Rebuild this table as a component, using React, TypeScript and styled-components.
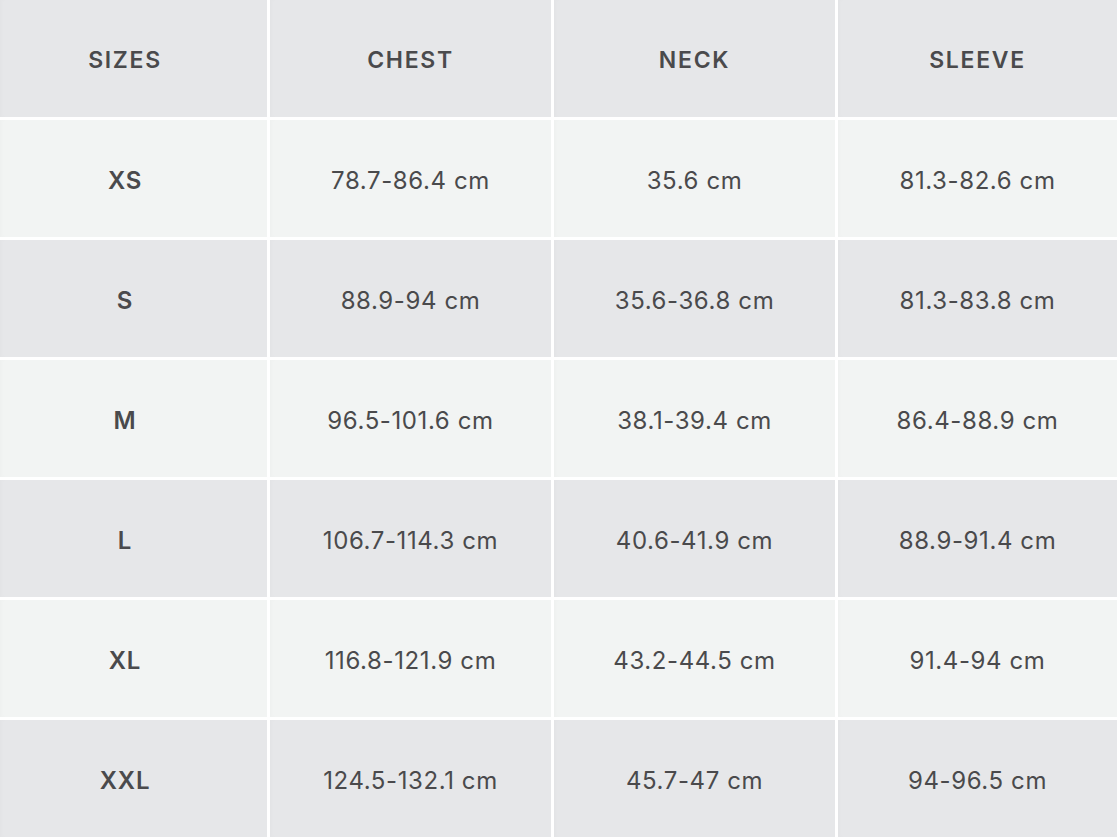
import React from "react";
import styled, { createGlobalStyle } from "styled-components";

const Global = createGlobalStyle`
  html, body { margin: 0; padding: 0; background: #ffffff; }
  body { font-family: Inter, "Noto Sans", sans-serif; }
`;

const Table = styled.div`
  display: grid;
  grid-template-columns: 267px 281px 281px 279px;
  grid-auto-rows: 117px;
  gap: 3px;
  padding-right: 3px;
  width: 1117px;
`;

const Cell = styled.div<{ $tone: "dark" | "light"; $first?: boolean; $head?: boolean }>`
  display: flex;
  align-items: center;
  justify-content: center;
  padding-top: 3px;
  padding-right: ${(p) => (p.$first ? "17px" : "0")};
  background: ${(p) => (p.$tone === "dark" ? "#e6e7e9" : "#f2f4f3")};
  color: #4a4a4c;
  font-family: Inter, "Noto Sans", sans-serif;
  font-size: ${(p) => (p.$head ? "23px" : "24px")};
  font-weight: ${(p) => (p.$head || p.$first ? 600 : 400)};
  letter-spacing: ${(p) => (p.$head ? "1.7px" : p.$first ? "0.8px" : "0.6px")};
  box-shadow: inset 3px 0 4px -2px rgba(0, 0, 0, 0.025);
`;

const headers = ["SIZES", "CHEST", "NECK", "SLEEVE"];
const rows: string[][] = [
  ["XS", "78.7-86.4 cm", "35.6 cm", "81.3-82.6 cm"],
  ["S", "88.9-94 cm", "35.6-36.8 cm", "81.3-83.8 cm"],
  ["M", "96.5-101.6 cm", "38.1-39.4 cm", "86.4-88.9 cm"],
  ["L", "106.7-114.3 cm", "40.6-41.9 cm", "88.9-91.4 cm"],
  ["XL", "116.8-121.9 cm", "43.2-44.5 cm", "91.4-94 cm"],
  ["XXL", "124.5-132.1 cm", "45.7-47 cm", "94-96.5 cm"],
];

export default function App() {
  return (
    <>
      <Global />
      <Table>
        {headers.map((h, j) => (
          <Cell key={h} $tone="dark" $head $first={j === 0}>
            {h}
          </Cell>
        ))}
        {rows.map((r, i) =>
          r.map((v, j) => (
            <Cell key={`${i}-${j}`} $tone={i % 2 === 0 ? "light" : "dark"} $first={j === 0}>
              {v}
            </Cell>
          ))
        )}
      </Table>
    </>
  );
}
